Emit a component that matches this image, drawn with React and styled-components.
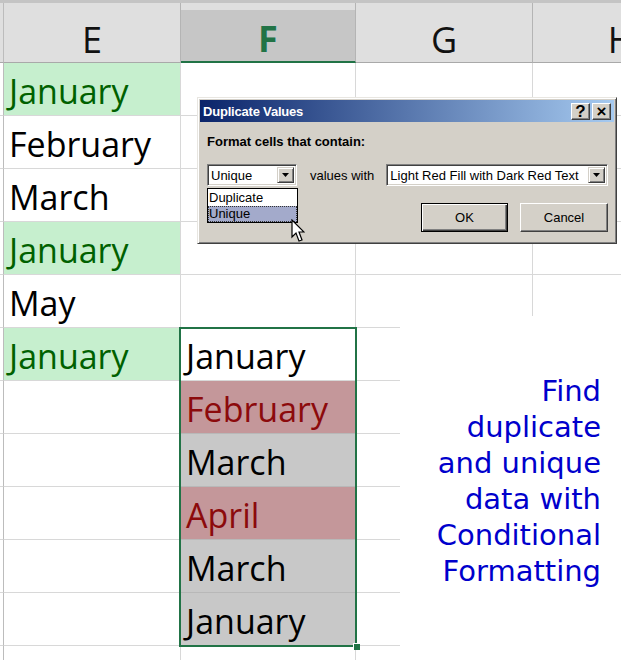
import React from 'react';
import styled, {createGlobalStyle} from 'styled-components';

const GlobalStyle = createGlobalStyle`
  html, body {
    margin: 0;
    padding: 0;
    background: #fff;
    overflow: hidden;
  }
`;

const columnE = [
  {text: 'January', good: true},
  {text: 'February'},
  {text: 'March'},
  {text: 'January', good: true},
  {text: 'May'},
  {text: 'January', good: true},
];

const columnF = [
  null, null, null, null, null,
  {text: 'January', tone: 'active'},
  {text: 'February', tone: 'dup'},
  {text: 'March', tone: 'sel'},
  {text: 'April', tone: 'dup'},
  {text: 'March', tone: 'sel'},
  {text: 'January', tone: 'sel'},
];

const ROWS = 12;

const Cursor = () => (
  <CursorSvg width="14" height="24" viewBox="0 0 14 24">
    <path
      d="M1 1 L1 18 L5 14 L8 22 L11 21 L8 13 L13 13 Z"
      fill="#fff"
      stroke="#000"
      strokeWidth="1.2"
      strokeLinejoin="miter"
    />
  </CursorSvg>
);

const Arrow = () => (
  <svg width="7" height="4" viewBox="0 0 7 4">
    <path d="M0 0 H7 L3.5 4 Z" fill="#000" />
  </svg>
);

const Dialog = () => (
  <Frame>
    <TitleBar>
      <Title>Duplicate Values</Title>
      <TitleButtons>
        <TitleButton>?</TitleButton>
        <TitleButton>×</TitleButton>
      </TitleButtons>
    </TitleBar>
    <DialogBody>
      <Label>Format cells that contain:</Label>
      <ControlRow>
        <SelectWrap>
          <Select $width={90}>
            <SelectText>Unique</SelectText>
            <DropButton><Arrow /></DropButton>
          </Select>
          <DropList>
            <ListItem>Duplicate</ListItem>
            <ListItem $active>Unique</ListItem>
          </DropList>
        </SelectWrap>
        <Plain>values with</Plain>
        <Select $width={222}>
          <SelectText>Light Red Fill with Dark Red Text</SelectText>
          <DropButton><Arrow /></DropButton>
        </Select>
      </ControlRow>
      <ButtonRow>
        <Button $default>OK</Button>
        <Button>Cancel</Button>
      </ButtonRow>
    </DialogBody>
  </Frame>
);

const App = () => (
  <>
    <GlobalStyle />
    <Page>
      <Sheet>
        <Stub $header />
        <ColHeader>E</ColHeader>
        <ColHeader $selected>F</ColHeader>
        <ColHeader>G</ColHeader>
        <ColHeader>H</ColHeader>
        {Array.from({length: ROWS}).map((_, i) => {
          const e = columnE[i];
          const f = columnF[i];
          return (
            <React.Fragment key={i}>
              <Stub />
              <Cell $good={e && e.good}>{e ? e.text : ''}</Cell>
              <Cell $tone={f ? f.tone : null}>{f ? f.text : ''}</Cell>
              <Cell />
              <Cell />
            </React.Fragment>
          );
        })}
      </Sheet>
      <Selection>
        <FillHandle />
      </Selection>
      <Caption>
        Find<br />duplicate<br />and unique<br />data with<br />Conditional<br />Formatting
      </Caption>
      <Dialog />
      <Cursor />
    </Page>
  </>
);

const Page = styled.div`
  position: relative;
  width: 621px;
  height: 660px;
  overflow: hidden;
  background: #fff;
`;

const Sheet = styled.div`
  display: grid;
  grid-template-columns: 4px 177px 175px 177px 177px;
  grid-template-rows: 60px repeat(${ROWS}, 53px);
  border-top: 3px solid #c4c4c4;
  font-family: 'Open Sans', 'Liberation Sans', sans-serif;
`;

const Stub = styled.div`
  background: ${p => (p.$header ? '#dfdfdf' : '#fff')};
  border-right: 1px solid #bcbcbc;
  border-bottom: 1px solid ${p => (p.$header ? '#a9a9a9' : '#d8d8d8')};
  box-sizing: border-box;
`;

const ColHeader = styled.div`
  box-sizing: border-box;
  display: flex;
  align-items: center;
  justify-content: center;
  padding-top: 13px;
  font-size: 36px;
  color: ${p => (p.$selected ? '#217346' : '#111')};
  font-weight: ${p => (p.$selected ? 700 : 400)};
  background: ${p =>
    p.$selected ? 'linear-gradient(#dfdfdf 7px, #c6c6c6 7px)' : '#dfdfdf'};
  border-right: 1px solid #b4b4b4;
  border-bottom: ${p => (p.$selected ? '2px solid #217346' : '1px solid #a9a9a9')};
`;

const toneBg = {
  active: '#fff',
  dup: '#c4979a',
  sel: '#c8c8c8',
};

const Cell = styled.div`
  box-sizing: border-box;
  display: flex;
  align-items: center;
  padding: 4px 0 0 5px;
  font-size: 34px;
  white-space: nowrap;
  background: ${p => (p.$good ? '#c6efce' : p.$tone ? toneBg[p.$tone] : '#fff')};
  color: ${p => (p.$good ? '#006100' : p.$tone === 'dup' ? '#8c0a0c' : '#000')};
  border-right: 1px solid #d8d8d8;
  border-bottom: 1px solid ${p => (p.$tone === 'sel' || p.$tone === 'dup' ? '#b8b8b8' : '#d8d8d8')};
`;

const Selection = styled.div`
  position: absolute;
  left: 179px;
  top: 327px;
  width: 178px;
  height: 320px;
  box-sizing: border-box;
  border: 2px solid #217346;
  pointer-events: none;
`;

const FillHandle = styled.div`
  position: absolute;
  right: -5px;
  bottom: -5px;
  width: 6px;
  height: 6px;
  background: #217346;
  border: 1px solid #fff;
  border-width: 1px 0 0 1px;
`;

const Caption = styled.div`
  position: absolute;
  left: 400px;
  top: 316px;
  right: 0;
  bottom: 0;
  background: #fff;
  box-sizing: border-box;
  padding: 57px 20px 0 0;
  text-align: right;
  font-family: 'DejaVu Sans', Verdana, sans-serif;
  font-size: 29px;
  line-height: 36px;
  color: #0000cc;
`;

const Frame = styled.div`
  position: absolute;
  left: 197px;
  top: 97px;
  width: 420px;
  height: 147px;
  box-sizing: border-box;
  padding: 2px;
  background: #d4d0c8;
  border: 1px solid;
  border-color: #e8e6e1 #404040 #404040 #e8e6e1;
  box-shadow: inset 1px 1px #fff, inset -1px -1px #808080;
  font-family: 'Liberation Sans', Arial, sans-serif;
  font-size: 13px;
  color: #000;
`;

const TitleBar = styled.div`
  height: 22px;
  display: flex;
  align-items: center;
  justify-content: space-between;
  padding: 0 3px 0 3px;
  background: linear-gradient(to right, #0a246a, #a6caf0);
`;

const Title = styled.span`
  color: #fff;
  font-weight: 700;
  font-size: 13px;
  letter-spacing: -0.2px;
`;

const TitleButtons = styled.div`
  display: flex;
  gap: 2px;
`;

const TitleButton = styled.div`
  width: 19px;
  height: 17px;
  box-sizing: border-box;
  display: flex;
  align-items: center;
  justify-content: center;
  background: #d4d0c8;
  border: 1px solid;
  border-color: #fff #404040 #404040 #fff;
  box-shadow: inset -1px -1px #808080;
  font-weight: 700;
  font-size: 17px;
  line-height: 1;
  color: #000;
`;

const DialogBody = styled.div`
  padding: 12px 6px 0 7px;
`;

const Label = styled.div`
  font-weight: 700;
  font-size: 13px;
  height: 16px;
  line-height: 16px;
`;

const ControlRow = styled.div`
  display: flex;
  align-items: center;
  margin-top: 14px;
`;

const SelectWrap = styled.div`
  position: relative;
  flex: none;
`;

const Select = styled.div`
  flex: none;
  width: ${p => p.$width}px;
  height: 22px;
  box-sizing: border-box;
  display: flex;
  align-items: center;
  justify-content: space-between;
  background: #fff;
  border: 1px solid;
  border-color: #808080 #fff #fff #808080;
  box-shadow: inset 1px 1px #404040, inset -1px -1px #d4d0c8;
  padding: 2px 2px 2px 3px;
`;

const SelectText = styled.span`
  white-space: nowrap;
`;

const DropButton = styled.div`
  width: 17px;
  height: 16px;
  box-sizing: border-box;
  display: flex;
  align-items: center;
  justify-content: center;
  background: #d4d0c8;
  border: 1px solid;
  border-color: #d4d0c8 #404040 #404040 #d4d0c8;
  box-shadow: inset 1px 1px #fff, inset -1px -1px #808080;
`;

const DropList = styled.div`
  position: absolute;
  left: 0;
  top: 24px;
  width: 91px;
  height: 35px;
  box-sizing: border-box;
  background: #fff;
  border: 1px solid #000;
  padding: 1px 0;
`;

const ListItem = styled.div`
  height: 16px;
  line-height: 16px;
  padding-left: 1px;
  background: ${p => (p.$active ? '#a3aacb' : 'transparent')};
  outline: ${p => (p.$active ? '1px dotted #333' : 'none')};
  outline-offset: -1px;
`;

const Plain = styled.span`
  flex: none;
  white-space: nowrap;
  margin: 0 12px 0 13px;
`;

const ButtonRow = styled.div`
  display: flex;
  justify-content: flex-end;
  gap: 12px;
  margin-top: 17px;
`;

const Button = styled.div`
  width: ${p => (p.$default ? 87 : 88)}px;
  height: 29px;
  box-sizing: border-box;
  display: flex;
  align-items: center;
  justify-content: center;
  background: #d4d0c8;
  border: 1px solid;
  border-color: ${p => (p.$default ? '#000' : '#fff #404040 #404040 #fff')};
  box-shadow: ${p =>
    p.$default
      ? 'inset 1px 1px #fff, inset -1px -1px #404040, inset -2px -2px #808080'
      : 'inset -1px -1px #808080'};
  font-size: 13px;
`;

const CursorSvg = styled.svg`
  position: absolute;
  left: 291px;
  top: 219px;
`;

export default App;
